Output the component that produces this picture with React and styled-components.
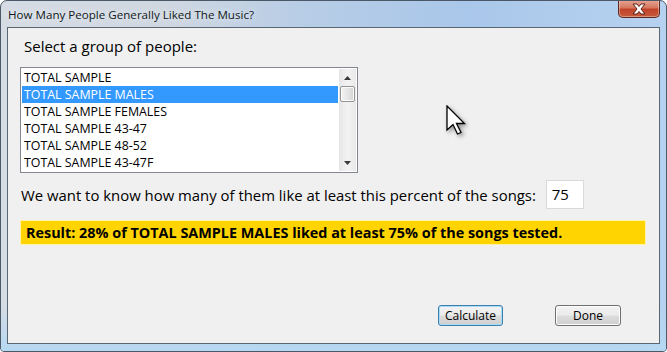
import React from "react";
import styled, { createGlobalStyle } from "styled-components";

const Global = createGlobalStyle`
  html, body { margin: 0; padding: 0; background: #ffffff; }
  body { font-family: "Open Sans", "Noto Sans", "DejaVu Sans", sans-serif; }
  * { box-sizing: border-box; }
`;

const Window = styled.div`
  position: relative;
  width: 667px;
  height: 352px;
  display: flex;
  flex-direction: column;
  border: 1px solid #4a5868;
  border-radius: 7px 7px 4px 4px;
  overflow: hidden;
  background: linear-gradient(90deg, #d6dce4 0%, #cfd7e1 25%, #b8cde6 45%, #a9c7ea 70%, #b7d2f0 100%);
`;

const TitleBar = styled.div`
  height: 26px;
  flex: none;
  display: flex;
  align-items: flex-start;
  justify-content: space-between;
  padding-left: 7px;
  padding-right: 6px;
`;

const Title = styled.span`
  font-size: 11.6px;
  line-height: 14px;
  margin-top: 7px;
  color: #101820;
  text-shadow: 0 0 6px rgba(255,255,255,0.9);
`;

const CloseButton = styled.div`
  width: 42px;
  height: 18px;
  margin-top: -1px;
  border: 1px solid #5a2a22;
  border-top: none;
  border-radius: 0 0 5px 5px;
  background: linear-gradient(180deg, #e8a596 0%, #d4785f 45%, #c1432a 55%, #c75a3c 100%);
  box-shadow: inset 0 0 0 1px rgba(255,255,255,0.35);
  display: flex;
  align-items: center;
  justify-content: center;
`;

const Frame = styled.div`
  flex: 1;
  display: flex;
  padding: 0 6px 7px 6px;
  background: linear-gradient(180deg, transparent 0%, transparent 85%, #b6d8f2 100%);
`;

const Client = styled.div`
  flex: 1;
  background: #f0f0f0;
  border: 1px solid #5b6673;
  display: flex;
  flex-direction: column;
  padding: 6px 13px 0 12px;
  font-family: "Open Sans", "Noto Sans", sans-serif;
  color: #000;
`;

const Heading = styled.div`
  font-size: 15px;
  line-height: 20px;
  padding-left: 4px;
  margin-top: 2px;
`;

const ListBox = styled.div`
  margin-top: 11px;
  width: 338px;
  height: 106px;
  border: 1px solid #828790;
  background: #fff;
  display: flex;
  padding: 1px 1px 1px 1px;
`;

const Items = styled.div`
  flex: 1;
  display: flex;
  flex-direction: column;
`;

const Item = styled.div`
  height: 17px;
  line-height: 17px;
  font-size: 12.4px;
  padding-left: 2px;
  margin-right: 1px;
  color: ${(p) => (p.selected ? "#ffffff" : "#000")};
  background: ${(p) => (p.selected ? "#3399ff" : "transparent")};
  white-space: nowrap;
`;

const ScrollBar = styled.div`
  width: 17px;
  display: flex;
  flex-direction: column;
  align-items: center;
  background: linear-gradient(90deg, #e6e6e6, #f3f3f3 50%, #e9e9e9);
`;

const Arrow = styled.div`
  height: 17px;
  width: 17px;
  display: flex;
  align-items: center;
  justify-content: center;
`;

const Thumb = styled.div`
  width: 15px;
  height: 16px;
  border: 1px solid #959595;
  border-radius: 2px;
  background: linear-gradient(90deg, #f4f4f4 0%, #e6e6e6 50%, #d4d4d4 100%);
  box-shadow: inset 0 0 0 1px #fbfbfb;
`;

const Track = styled.div`
  flex: 1;
`;

const QuestionRow = styled.div`
  margin-top: 7px;
  display: flex;
  align-items: center;
  gap: 10px;
`;

const Question = styled.span`
  font-size: 14.9px;
  line-height: 20px;
  padding-left: 1px;
`;

const PercentInput = styled.div`
  width: 38px;
  height: 29px;
  background: #fff;
  border: 1px solid #d9d9d9;
  font-size: 14.9px;
  line-height: 27px;
  padding-left: 5px;
`;

const Result = styled.div`
  margin-top: 11px;
  height: 25px;
  width: 626px;
  background: #ffd400;
  border: 1px solid #fff3a8;
  font-weight: 700;
  font-size: 14.4px;
  line-height: 23px;
  padding-left: 5px;
  white-space: nowrap;
`;

const ButtonRow = styled.div`
  margin-top: auto;
  margin-bottom: 17px;
  display: flex;
  justify-content: flex-end;
  gap: 52px;
  padding-right: 25px;
`;

const Button = styled.div`
  width: ${(p) => p.w}px;
  height: 21px;
  border-radius: 3px;
  border: 1px solid ${(p) => (p.focused ? "#3c7fb1" : "#707070")};
  background: linear-gradient(180deg, #f3f3f3 0%, #ebebeb 48%, #dddddd 52%, #cfcfcf 100%);
  box-shadow: inset 0 0 0 1px ${(p) => (p.focused ? "#a8dcf6" : "#fcfcfc")};
  font-size: 12px;
  line-height: 19px;
  text-align: center;
  color: #000;
`;

const Cursor = styled.svg`
  position: absolute;
  left: 445px;
  top: 104px;
  filter: drop-shadow(2px 2px 2px rgba(0,0,0,0.4));
`;

const items = [
  "TOTAL SAMPLE",
  "TOTAL SAMPLE MALES",
  "TOTAL SAMPLE FEMALES",
  "TOTAL SAMPLE 43-47",
  "TOTAL SAMPLE 48-52",
  "TOTAL SAMPLE 43-47F",
];

export default function App() {
  return (
    <>
      <Global />
      <Window>
        <TitleBar>
          <Title>How Many People Generally Liked The Music?</Title>
          <CloseButton>
            <svg width="16" height="12" viewBox="0 0 16 12">
              <path
                d="M2 1 L6 1 L8 3.5 L10 1 L14 1 L10 6 L14 11 L10 11 L8 8.5 L6 11 L2 11 L6 6 Z"
                fill="#ffffff"
                stroke="#5a2418"
                strokeWidth="1"
                strokeLinejoin="round"
              />
            </svg>
          </CloseButton>
        </TitleBar>
        <Frame>
          <Client>
            <Heading>Select a group of people:</Heading>
            <ListBox>
              <Items>
                {items.map((t, i) => (
                  <Item key={t} selected={i === 1}>
                    {t}
                  </Item>
                ))}
              </Items>
              <ScrollBar>
                <Arrow>
                  <svg width="7" height="4" viewBox="0 0 7 4">
                    <path d="M0 4 L3.5 0 L7 4 Z" fill="#3a3a3a" />
                  </svg>
                </Arrow>
                <Thumb />
                <Track />
                <Arrow>
                  <svg width="7" height="4" viewBox="0 0 7 4">
                    <path d="M0 0 L3.5 4 L7 0 Z" fill="#3a3a3a" />
                  </svg>
                </Arrow>
              </ScrollBar>
            </ListBox>
            <QuestionRow>
              <Question>
                We want to know how many of them like at least this percent of the songs:
              </Question>
              <PercentInput>75</PercentInput>
            </QuestionRow>
            <Result>
              Result: 28% of TOTAL SAMPLE MALES liked at least 75% of the songs tested.
            </Result>
            <ButtonRow>
              <Button w={65} focused>
                Calculate
              </Button>
              <Button w={66}>Done</Button>
            </ButtonRow>
          </Client>
        </Frame>
        <Cursor width="22" height="32" viewBox="0 0 22 32">
          <path
            d="M1 1 L1 25 L7 19.5 L11.5 29 L15 27.5 L10.5 18.5 L18.5 18.5 Z"
            fill="#ffffff"
            stroke="#000000"
            strokeWidth="1.3"
            strokeLinejoin="miter"
          />
        </Cursor>
      </Window>
    </>
  );
}
